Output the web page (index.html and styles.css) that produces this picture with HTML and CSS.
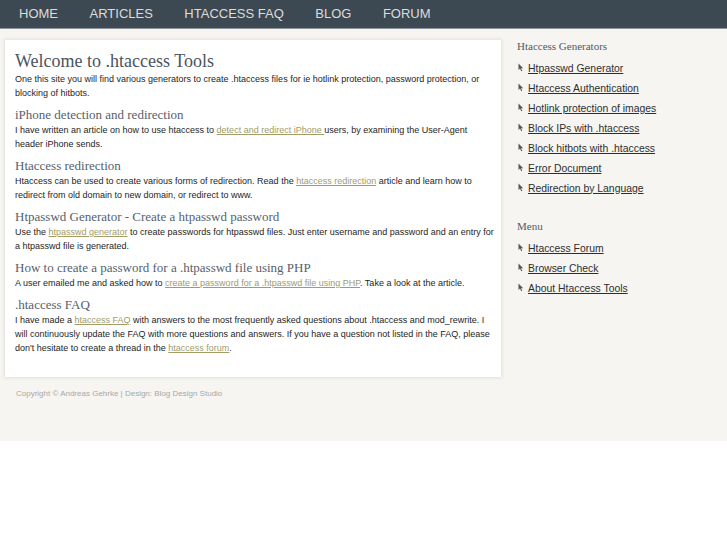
FILE: index.html
```html
<!DOCTYPE html>
<html>
<head>
<meta charset="utf-8">
<title>htaccess Tools</title>
<link rel="stylesheet" href="styles.css">
</head>
<body>
<nav class="topnav">
  <a href="#">HOME</a>
  <a href="#">ARTICLES</a>
  <a href="#">HTACCESS FAQ</a>
  <a href="#">BLOG</a>
  <a href="#">FORUM</a>
</nav>
<div class="page">
  <div class="columns">
    <main class="content">
      <h1>Welcome to .htaccess Tools</h1>
      <p>One this site you will find various generators to create .htaccess files for ie hotlink protection, password protection, or blocking of hitbots.</p>
      <h2>iPhone detection and redirection</h2>
      <p>I have written an article on how to use htaccess to <a href="#">detect and redirect iPhone </a>users, by examining the User-Agent header iPhone sends.</p>
      <h2>Htaccess redirection</h2>
      <p>Htaccess can be used to create various forms of redirection. Read the <a href="#">htaccess redirection</a> article and learn how to redirect from old domain to new domain, or redirect to www.</p>
      <h2>Htpasswd Generator - Create a htpasswd password</h2>
      <p>Use the <a href="#">htpasswd generator</a> to create passwords for htpasswd files. Just enter username and password and an entry for a htpasswd file is generated.</p>
      <h2>How to create a password for a .htpasswd file using PHP</h2>
      <p>A user emailed me and asked how to <a href="#">create a password for a .htpasswd file using PHP</a>. Take a look at the article.</p>
      <h2>.htaccess FAQ</h2>
      <p>I have made a <a href="#">htaccess FAQ</a> with answers to the most frequently asked questions about .htaccess and mod_rewrite. I will continuously update the FAQ with more questions and answers. If you have a question not listed in the FAQ, please don't hesitate to create a thread in the <a href="#">htaccess forum</a>.</p>
    </main>
    <aside class="sidebar">
      <h3>Htaccess Generators</h3>
      <ul>
        <li><svg class="cur" viewBox="0 0 6 9" width="6" height="9"><path d="M0.5 0.5 L0.5 7 L2 5.6 L3.2 8.3 L4.2 7.8 L3 5.2 L5.2 5.2 Z" fill="#555"/></svg><a href="#">Htpasswd Generator</a></li>
        <li><svg class="cur" viewBox="0 0 6 9" width="6" height="9"><path d="M0.5 0.5 L0.5 7 L2 5.6 L3.2 8.3 L4.2 7.8 L3 5.2 L5.2 5.2 Z" fill="#555"/></svg><a href="#">Htaccess Authentication</a></li>
        <li><svg class="cur" viewBox="0 0 6 9" width="6" height="9"><path d="M0.5 0.5 L0.5 7 L2 5.6 L3.2 8.3 L4.2 7.8 L3 5.2 L5.2 5.2 Z" fill="#555"/></svg><a href="#">Hotlink protection of images</a></li>
        <li><svg class="cur" viewBox="0 0 6 9" width="6" height="9"><path d="M0.5 0.5 L0.5 7 L2 5.6 L3.2 8.3 L4.2 7.8 L3 5.2 L5.2 5.2 Z" fill="#555"/></svg><a href="#">Block IPs with .htaccess</a></li>
        <li><svg class="cur" viewBox="0 0 6 9" width="6" height="9"><path d="M0.5 0.5 L0.5 7 L2 5.6 L3.2 8.3 L4.2 7.8 L3 5.2 L5.2 5.2 Z" fill="#555"/></svg><a href="#">Block hitbots with .htaccess</a></li>
        <li><svg class="cur" viewBox="0 0 6 9" width="6" height="9"><path d="M0.5 0.5 L0.5 7 L2 5.6 L3.2 8.3 L4.2 7.8 L3 5.2 L5.2 5.2 Z" fill="#555"/></svg><a href="#">Error Document</a></li>
        <li><svg class="cur" viewBox="0 0 6 9" width="6" height="9"><path d="M0.5 0.5 L0.5 7 L2 5.6 L3.2 8.3 L4.2 7.8 L3 5.2 L5.2 5.2 Z" fill="#555"/></svg><a href="#">Redirection by Language</a></li>
      </ul>
      <h3 class="second">Menu</h3>
      <ul>
        <li><svg class="cur" viewBox="0 0 6 9" width="6" height="9"><path d="M0.5 0.5 L0.5 7 L2 5.6 L3.2 8.3 L4.2 7.8 L3 5.2 L5.2 5.2 Z" fill="#555"/></svg><a href="#">Htaccess Forum</a></li>
        <li><svg class="cur" viewBox="0 0 6 9" width="6" height="9"><path d="M0.5 0.5 L0.5 7 L2 5.6 L3.2 8.3 L4.2 7.8 L3 5.2 L5.2 5.2 Z" fill="#555"/></svg><a href="#">Browser Check</a></li>
        <li><svg class="cur" viewBox="0 0 6 9" width="6" height="9"><path d="M0.5 0.5 L0.5 7 L2 5.6 L3.2 8.3 L4.2 7.8 L3 5.2 L5.2 5.2 Z" fill="#555"/></svg><a href="#">About Htaccess Tools</a></li>
      </ul>
    </aside>
  </div>
  <footer class="footer">Copyright © Andreas Gehrke | Design: Blog Design Studio</footer>
</div>
</body>
</html>
```
FILE: styles.css
```css
html, body {
  margin: 0;
  padding: 0;
  background: #ffffff;
  font-family: "Liberation Sans", Arial, sans-serif;
}
.topnav {
  height: 29px;
  background: #3c4852;
  border-bottom: 1px solid #8e969c;
  display: flex;
  align-items: center;
  padding-left: 19px;
  gap: 31.5px;
  box-sizing: border-box;
}
.topnav a {
  color: #dcdcdc;
  text-decoration: none;
  font-size: 13px;
  line-height: 16px;
}
.page {
  background: #f6f5f1;
  padding-top: 11px;
  padding-bottom: 42px;
}
.columns {
  display: flex;
  align-items: flex-start;
}
.content {
  width: 481px;
  flex: none;
  margin-left: 5px;
  background: #ffffff;
  box-shadow: 0 0 3px 1px #e2e0da;
  padding: 10px 5px 22px 10px;
}
.content h1 {
  margin: 0;
  font-family: "Liberation Serif", "Times New Roman", serif;
  font-weight: normal;
  font-size: 18px;
  line-height: 22px;
  color: #4a5560;
}
.content h2 {
  margin: 7px 0 0 0;
  font-family: "Liberation Serif", "Times New Roman", serif;
  font-weight: normal;
  font-size: 13px;
  line-height: 16px;
  color: #56616b;
}
.content p {
  margin: 0;
  font-size: 9px;
  line-height: 14px;
  color: #1e1e1e;
}
.content a {
  color: #a19c68;
  text-decoration: underline;
}
.sidebar {
  margin-left: 16px;
  margin-top: -1px;
  flex: 1;
}
.sidebar h3 {
  margin: 0;
  font-family: "Liberation Serif", "Times New Roman", serif;
  font-weight: normal;
  font-size: 11px;
  line-height: 14px;
  color: #505b66;
}
.sidebar h3.second {
  margin-top: 21px;
}
.sidebar ul {
  list-style: none;
  margin: 5px 0 0 0;
  padding: 0;
}
.sidebar li {
  display: flex;
  align-items: center;
  height: 20px;
  padding-left: 1px;
}
.sidebar .cur {
  margin-right: 4px;
  flex: none;
  margin-top: -2px;
}
.sidebar a {
  color: #2e2e2e;
  font-size: 10.4px;
  text-decoration: underline;
}
.footer {
  padding: 12px 0 0 16px;
  font-size: 8px;
  line-height: 10px;
  color: #a9a8a4;
}
```
